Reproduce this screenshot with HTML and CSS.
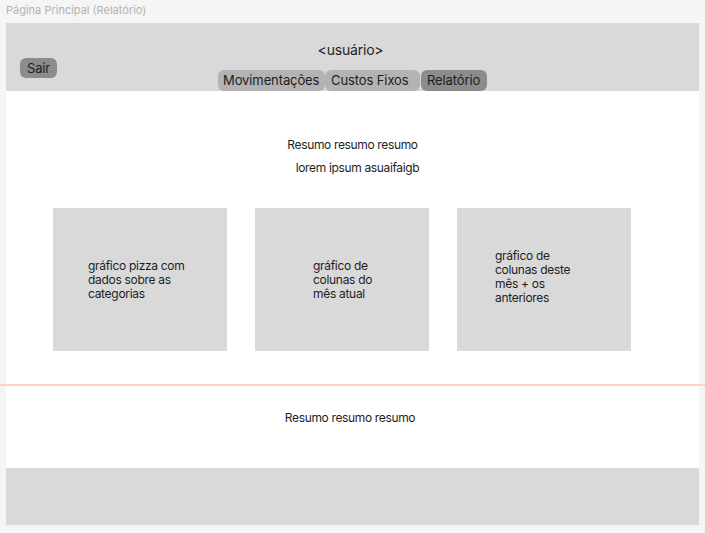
FILE: index.html
```html
<!DOCTYPE html>
<html lang="pt">
<head>
<meta charset="utf-8">
<title>Página Principal (Relatório)</title>
<link rel="stylesheet" href="styles.css">
</head>
<body>
<div class="canvas-label">Página Principal (Relatório)</div>
<div class="frame">
  <header class="header">
    <div class="header-left"><button class="btn-sair">Sair</button></div>
    <div class="header-center">
      <div class="user">&lt;usuário&gt;</div>
      <nav class="tabs">
        <span class="tab tab-mov">Movimentações</span>
        <span class="tab tab-custos">Custos Fixos</span>
        <span class="tab tab-rel active">Relatório</span>
      </nav>
    </div>
    <div class="header-right"></div>
  </header>
  <main class="main">
    <p class="summary">Resumo resumo resumo</p>
    <p class="summary summary-sub">lorem ipsum asuaifaigb</p>
    <section class="cards">
      <div class="card card-1"><p class="card-text">gráfico pizza com dados sobre as categorias</p></div>
      <div class="card card-2"><p class="card-text">gráfico de colunas do mês atual</p></div>
      <div class="card card-3"><p class="card-text">gráfico de colunas deste mês + os anteriores</p></div>
    </section>
    <p class="summary summary-bottom">Resumo resumo resumo</p>
  </main>
  <footer class="footer"></footer>
</div>
<div class="guide"></div>
</body>
</html>
```
FILE: styles.css
```css
* { box-sizing: border-box; }
html, body {
  margin: 0;
  padding: 0;
  background: #f5f5f5;
  font-family: Inter, "Noto Sans", sans-serif;
  color: #1e1e1e;
}
body { position: relative; height: 533px; overflow: hidden; }
.canvas-label {
  height: 23px;
  padding-left: 6px;
  padding-top: 4px;
  font-size: 11px;
  line-height: 13px;
  color: #b3b3b3;
}
.frame {
  margin-left: 6px;
  width: 693px;
  height: 502px;
  background: #ffffff;
  display: flex;
  flex-direction: column;
}
.header {
  height: 68px;
  background: #d9d9d9;
  display: grid;
  grid-template-columns: 1fr auto 1fr;
}
.header-left {
  display: flex;
  align-items: flex-end;
  padding-left: 14px;
  padding-bottom: 13px;
}
.btn-sair {
  height: 20px;
  width: 37px;
  border: none;
  border-radius: 6px;
  background: #8c8c8c;
  color: #1e1e1e;
  font-family: Inter, sans-serif;
  font-size: 13px;
  letter-spacing: -0.2px;
  padding: 0;
  line-height: 20px;
}
.header-center {
  display: flex;
  flex-direction: column;
  align-items: center;
  padding-top: 18px;
}
.user {
  font-size: 14px;
  line-height: 17px;
  height: 29px;
  letter-spacing: -0.2px;
  padding-right: 4px;
}
.tabs {
  display: flex;
  margin-top: auto;
}
.tab {
  height: 21px;
  line-height: 21px;
  font-size: 13px;
  letter-spacing: -0.1px;
  border-radius: 6px;
  background: #b3b3b3;
  padding: 0 0 0 6px;
  white-space: nowrap;
}
.tab-mov { width: 107px; padding-left: 5px; }
.tab-custos { width: 95px; }
.tab-rel { width: 66px; margin-left: 1px; }
.tab.active { background: #8c8c8c; }
.main {
  flex: 1;
  padding-top: 46px;
  display: flex;
  flex-direction: column;
}
.summary {
  margin: 0;
  font-size: 12px;
  line-height: 15px;
  letter-spacing: -0.35px;
  text-align: center;
}
.summary-sub { margin-top: 8px; padding-left: 10px; }
.summary-bottom { margin-top: 59px; padding-right: 5px; }
.cards {
  display: flex;
  gap: 28px;
  margin-top: 33px;
  padding-left: 47px;
}
.card {
  width: 174px;
  height: 143px;
  background: #d9d9d9;
  display: flex;
  align-items: center;
}
.card-text {
  margin: 0;
  font-size: 12px;
  line-height: 14px;
  letter-spacing: -0.3px;
}
.card-1 .card-text { margin-left: 35px; width: 102px; }
.card-2 .card-text { margin-left: 58px; width: 66px; }
.card-3 .card-text { margin-left: 38px; width: 82px; margin-top: -5px; }
.footer {
  height: 57px;
  background: #d9d9d9;
}
.guide {
  position: absolute;
  left: 0;
  right: 0;
  top: 384px;
  height: 2px;
  background: #fdd0ca;
}
```
